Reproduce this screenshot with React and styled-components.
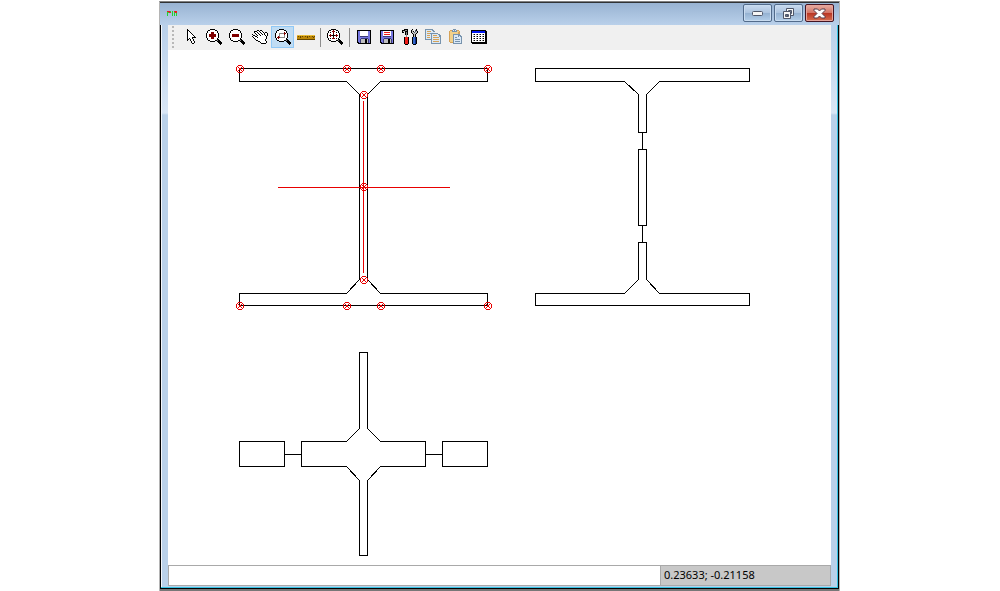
import React from "react";
import styled, { createGlobalStyle } from "styled-components";

const GlobalStyle = createGlobalStyle`
  * { box-sizing: border-box; }
  body { margin: 0; background: #fff; font-family: "Noto Sans", Tahoma, sans-serif; font-size: 11px; color: #000; }
  button, input { font: inherit; }
`;

const Window = styled.main`
  margin: 1px 160px 0 159px;
  min-width: 440px;
  border-left: 1px solid #b4b4b4;
  border-right: 1px solid #b4b4b4;
  border-top: 1px solid #808080;
`;

const TitleBar = styled.header`
  display: flex;
  align-items: center;
  justify-content: space-between;
  height: 23px;
  padding: 0 5px 2px 7px;
  border-top: 1px solid #303234;
  background: linear-gradient(#98b3d2, #b9d0ea);
`;

const Caption = styled.div`
  display: flex;
  gap: 2px;
`;

const CaptionButton = styled.button`
  display: flex;
  align-items: center;
  justify-content: center;
  width: 29px;
  height: 18px;
  padding: 0;
  border: 1px solid ${(p) => (p.$close ? "#431422" : "#526b8b")};
  border-radius: 2px;
  box-shadow: inset 0 0 0 1px ${(p) => (p.$close ? "#e6a49b" : "#c9dcf0")};
  background: ${(p) =>
    p.$close
      ? "linear-gradient(#e3a296 0 10%, #d37567 48%, #b83322 50%, #d66f50)"
      : "linear-gradient(#c3d6ec 0 10%, #adc4df 48%, #94b1d1 50%, #b3cee9)"};
`;

const Frame = styled.div`
  padding: 0 1px 0 0;
  border-left: 1px solid #000;
  border-right: 1px solid #000;
  border-bottom: 1px solid #000;
  background: #35c3e4;
`;

const Chrome = styled.div`
  margin-bottom: 1px;
  padding: 0 6px 1px 6px;
  border-left: 1px solid #f4f7fb;
  background: linear-gradient(#b9d0ea 0, #d9e6f5 88px, #bad1e9 90px, #bad1e9 100%);
`;

const Bottom = styled.div`
  height: 2px;
  background: #777;
`;

const Toolbar = styled.div`
  display: flex;
  align-items: center;
  height: 25px;
  padding: 0 0 1px 4px;
  background: #f0f0f0;
`;

const Grip = styled.div`
  width: 2px;
  height: 22px;
  margin-right: 5px;
  background: repeating-linear-gradient(#b8b8b8 0 2px, transparent 2px 4px);
`;

const Tool = styled.button`
  display: flex;
  align-items: center;
  justify-content: center;
  width: 23px;
  height: 22px;
  padding: 0;
  border: 1px solid ${(p) => (p.$active ? "#90c8f6" : "transparent")};
  background: ${(p) => (p.$active ? "#c0dcf3" : "transparent")};
`;

const Separator = styled.div`
  width: 1px;
  height: 19px;
  margin: 0 2px 0 3px;
  background: #8d8d8d;
`;

const Canvas = styled.section`
  height: 515px;
  overflow: hidden;
  background: #fff;
  svg { display: block; }
`;

const StatusBar = styled.footer`
  display: flex;
  height: 21px;
  border: 1px solid #a9a9a9;
  background: #c8c8c8;
`;

const Command = styled.input`
  flex: 1;
  min-width: 0;
  padding: 0 2px;
  border: 0;
  border-right: 1px solid #a9a9a9;
  outline: none;
  background: #fff;
`;

const Coordinates = styled.output`
  width: 169px;
  padding-left: 3px;
  line-height: 18px;
`;

const palette = {
  K: "#000", W: "#fff", R: "#800000", r: "#ef1c18", B: "#7777e0", b: "#0018f0",
  g: "#888888", G: "#c0c0c0", L: "#f2f2f2", Y: "#bd8706", y: "#e8bb38", D: "#654600",
  N: "#0b2c8c", n: "#3267c8", C: "#7793ad", c: "#dbe9f6", T: "#d6a257", t: "#f0d08a",
  S: "#485868", E: "#20d630", q: "#3b3b78",
};

function PixelIcon({ rows, width = 16 }) {
  const cells = [];
  rows.forEach((row, y) => {
    for (let x = 0; x < row.length; ) {
      const key = row[x];
      let end = x + 1;
      while (row[end] === key) end += 1;
      if (palette[key]) cells.push(<rect key={`${x}-${y}`} x={x} y={y} width={end - x} height="1" fill={palette[key]} />);
      x = end;
    }
  });
  return (
    <svg width={width} height={rows.length} viewBox={`0 0 ${width} ${rows.length}`} shapeRendering="crispEdges" aria-hidden="true">
      {cells}
    </svg>
  );
}

const lens = (inner) => [
  "....KKKKK.......",
  "..KKWWWWWKK.....",
  ".KWWWWWWWWWK....",
  ".K" + inner[0] + "K....",
  "KW" + inner[1] + "WK...",
  "KW" + inner[2] + "WK...",
  "KW" + inner[3] + "WK...",
  "KW" + inner[4] + "WK...",
  "KW" + inner[5] + "WK...",
  ".K" + inner[6] + "K....",
  ".KWWWWWWWWWKK...",
  "..KKWWWWWKKgKK..",
  "....KKKKK..KKKK.",
  "............KKKK",
  ".............KKK",
  "..............K.",
];

const icons = {
  pointer: [
    "....K...........", "....KK..........", "....KWK.........", "....KWWK........",
    "....KWWWK.......", "....KWWWWK......", "....KWWWWWK.....", "....KWWWWWWK....",
    "....KWWWWKKKK...", "....KWKWWK......", "....KK.KWWK.....", "....K..KWWK.....",
    "........KWWK....", "........KWWK....", ".........KK.....", "................",
  ],
  zoomIn: lens(["WWWRRRWWW", "WWWRRRWWW", "WRRRRRRRW", "WRRRRRRRW", "WRRRRRRRW", "WWWRRRWWW", "WWWRRRWWW"]),
  zoomOut: lens(["WWWWWWWWW", "WWWWWWWWW", "WRRRRRRRW", "WRRRRRRRW", "WRRRRRRRW", "WWWWWWWWW", "WWWWWWWWW"]),
  zoomArea: lens(["WWWWWWWRW", "WWgggggRR", "WWgWWWWRW", "WWgWWWWgW", "WRgWWWWgW", "RRRgggggW", "WRWWWWWWW"]),
  pan: [
    "................", ".....KK.KK......", "..KKKWWKWWK.....", "..KWWKWWKWWK.KK.",
    "...KWWKWWKWWKWWK", "K...KWWKWWKWKWWK", "WKK..KWWKWWWWKWK", "KWWKKWWWWWWWWWK.",
    ".KWWWKWWWWWWWWK.", "..KWWWWWWWWWWWK.", "...KWWWWWWWWWK..", "....KKWWWWWWWK..",
    "......KKWWWWWWK.", "........KWWWWWK.", ".........KKKKK..", "................",
  ],
  ruler: [
    "yyyyyyyyyyyyyyyyyy", "YDYDYDYYDYDYDYYDYD", "YYYDYYYYYYDYYYYYDY",
    "YYYYYYYYYYYYYYYYYY", "DDDDDDDDDDDDDDDDDD",
  ],
  fit: lens(["WKWWRWWKW", "WWWWRWWWW", "WRWWKWWRW", "RRRKKKRRR", "WRWWKWWRW", "WWWWRWWWW", "WKWRRRWKW"]).map((row, y) =>
    y === 2 ? ".KWWWRRRWWWK...." : y === 1 ? "..KKWWRWWKK....." : row
  ),
  save: [
    "................", ".KKKKKKKKKKKKKK.", ".KBBWWWWWWWWBBK.", ".KBBWWWWWWWWBBK.",
    ".KBBWWWWWWWWBBK.", ".KBBWWWWWWWWBBK.", ".KBBWWWWWWWWBBK.", ".KBBqqqqqqqqBBK.",
    ".KBBBBBBBBBBBBK.", ".KBBBqqqqqqqBBK.", ".KBBqGGGGKKGqBK.", ".KBBqGGGGKKGqBK.",
    ".KBBqGGGGKKGqBK.", ".KKBqGGGGKKGqBK.", "..KKKKKKKKKKKKK.", "................",
  ],
  tools: [
    "..KKKK....K...K.", "KKKggK...KG..SK.", "KGGKKK...KGK.SGK", "KK.KgK...KGGSGGK",
    "...KgK....KGGGK.", "...KgK.....KGK..", "....g......KGK..", "....g......KGK..",
    "..KrrrK...KnnNK.", "..KrrrK...KnnNK.", "..KrrrK...KnnNK.", "..KrrrK...KnnNK.",
    "..KrrrK...KnnNK.", "..KrrrK...KnnNK.", "..KrrrK...KnnNK.", "...KKK.....KKK..",
  ],
  copy: [
    "CCCCCCCC........", "CccccccCC.......", "CcTTTTccCC......", "Cccccccccc......",
    "CcTTTCCCCCCCC...", "CcccccCccccccCC.", "CcTTTcCcTTTTccCC", "CcccccCcccccccCC",
    "CcTTTcCcTTTTTTcC", "CcccccCccccccccC", "CCCCCCCcTTTTTTcC", "......CccccccccC",
    "......CcTTTTTTcC", "......CccccccccC", "......CCCCCCCCCC", "................",
  ],
  paste: [
    ".....CCC........", "..TTCcCcCTT.....", ".TttCCCCCttT....", ".TttttttttTT....",
    ".TttttttttTT....", ".TtttCCCCCCC....", ".TtttCccccCCC...", ".TtttCccccCcCC..",
    ".TtttCcCCccccC..", ".TtttCcccccccC..", ".TtttCcCCCCCcC..", ".TtttCcccccccC..",
    ".TtttCcCCCCCcC..", "..TTTCcccccccC..", ".....CCCCCCCCC..", "................",
  ],
  table: [
    "................", "KKKKKKKKKKKKKKK.", "KbbbbbbbbbbbbbKK", "KbbbbbbbbbbbbbKK",
    "KWWWWWWWWWWWWWKK", "KWgKWgKWgKWgKWKK", "KWWWWWWWWWWWWWKK", "KWgKWgKWgKWgKWKK",
    "KWWWWWWWWWWWWWKK", "KWgKWgKWgKWgKWKK", "KWWWWWWWWWWWWWKK", "KWgKWgKWgKWgKWKK",
    "KWWWWWWWWWWWWWKK", "KKKKKKKKKKKKKKKK", ".KKKKKKKKKKKKKKK", "................",
  ],
  app: ["rrrE.E.rrr", "EErr.E.Err", "E....E.E.E", "E....E.E.E", "E....E.E.E"],
};

icons.saveAs = icons.save.map((row, y) =>
  y === 3 || y === 5 ? ".KBBWrrrrrrWBBK." : row
);

const toolGroups = [
  [["pointer", "Select"], ["zoomIn", "Zoom in"], ["zoomOut", "Zoom out"], ["pan", "Pan"], ["zoomArea", "Zoom area"], ["ruler", "Measure"]],
  [["fit", "Zoom to fit"]],
  [["save", "Save"], ["saveAs", "Save as"], ["tools", "Settings"], ["copy", "Copy"], ["paste", "Paste"], ["table", "Table"]],
];

const nodes = [
  [240, 69], [347, 69], [381, 69], [488, 69], [364, 95], [364, 187],
  [364, 280], [240, 306], [347, 306], [381, 306], [488, 306],
];

function Drawing() {
  return (
    <svg width="663" height="515" viewBox="168 50 663 515" role="img" aria-label="Column and beam cross sections">
      <g fill="none" stroke="#000" shapeRendering="crispEdges" transform="translate(.5 .5)">
        <path d="M239 68H487V81H380L367 94V279L380 293H487V305H239V293H346L359 279V94L346 81H239Z" />
        <path d="M638 132V94L624 81H535V68H749V81H659L646 94V132ZM642 132V149M638 149H646V225H638ZM642 225V242M638 242H646V279L659 293H749V305H535V293H624L638 279Z" />
        <path d="M239 441H284V466H239ZM284 454H301M425 454H442M442 441H487V466H442ZM301 441H346L359 428V352H367V428L380 441H425V466H380L367 480V555H359V480L346 466H301Z" />
        <path stroke="#e80000" d="M363 100V272M277 187H449" />
      </g>
      <g fill="none" stroke="#e80000" shapeRendering="crispEdges">
        {nodes.map(([x, y]) => (
          <g key={`${x}-${y}`} transform={`translate(${x} ${y})`}>
            <circle r="3.5" />
            <path d="M-2.5-2.5L2.5 2.5M2.5-2.5L-2.5 2.5" />
          </g>
        ))}
      </g>
    </svg>
  );
}

export default function App() {
  return (
    <>
      <GlobalStyle />
      <Window>
        <TitleBar>
          <PixelIcon rows={icons.app} width={10} />
          <Caption>
            <CaptionButton aria-label="Minimize">
              <svg width="13" height="6"><rect x="1.5" y="1.5" width="10" height="4" rx="1" fill="#f5f5f5" stroke="#4e5669" /></svg>
            </CaptionButton>
            <CaptionButton aria-label="Restore">
              <svg width="13" height="13" fill="#f5f5f5" stroke="#4e5669">
                <path d="M4.5 1.5H11.5V8.5H4.5ZM6.5 3.5H9.5V6.5H6.5Z" fillRule="evenodd" />
                <path d="M1.5 4.5H8.5V11.5H1.5ZM3.5 7.5H6.5V9.5H3.5Z" fillRule="evenodd" />
              </svg>
            </CaptionButton>
            <CaptionButton $close aria-label="Close">
              <svg width="13" height="11"><path d="M1 1H4.5L6.5 3 8.5 1H12V2.5L9 5.5 12 8.5V10H8.5L6.5 8 4.5 10H1V8.5L4 5.5 1 2.5Z" fill="#fff" stroke="#563c48" /></svg>
            </CaptionButton>
          </Caption>
        </TitleBar>
        <Frame>
          <Chrome>
            <Toolbar role="toolbar" aria-label="Drawing tools">
              <Grip />
              {toolGroups.map((group, index) => (
                <React.Fragment key={index}>
                  {index > 0 && <Separator />}
                  {group.map(([name, label]) => (
                    <Tool key={name} aria-label={label} $active={name === "zoomArea"}>
                      <PixelIcon rows={icons[name]} width={name === "ruler" ? 18 : 16} />
                    </Tool>
                  ))}
                </React.Fragment>
              ))}
            </Toolbar>
            <Canvas>
              <Drawing />
            </Canvas>
            <StatusBar>
              <Command aria-label="Command" />
              <Coordinates>0.23633; -0.21158</Coordinates>
            </StatusBar>
          </Chrome>
        </Frame>
        <Bottom />
      </Window>
    </>
  );
}
